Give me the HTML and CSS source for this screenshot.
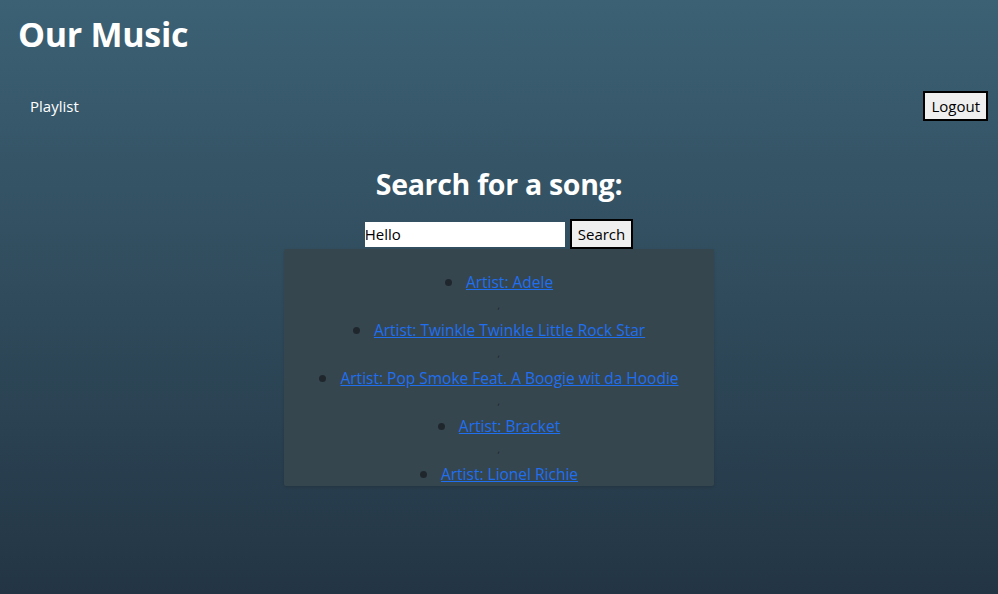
FILE: index.html
```html
<!DOCTYPE html>
<html>
<head>
<meta charset="utf-8">
<link rel="stylesheet" href="styles.css">
</head>
<body>
<div class="app">
  <h1 class="title">Our Music</h1>
  <nav class="nav">
    <a class="nav-link" href="#">Playlist</a>
    <button class="btn logout">Logout</button>
  </nav>
  <main class="search">
    <h2 class="search-title">Search for a song:</h2>
    <form class="search-form">
      <input class="search-input" type="text" value="Hello">
      <button class="btn search-btn" type="button">Search</button>
    </form>
    <div class="results">
      <ul class="result-list">
        <li><a href="#">Artist: Adele</a></li>
        <span class="sep">,</span>
        <li><a href="#">Artist: Twinkle Twinkle Little Rock Star</a></li>
        <span class="sep">,</span>
        <li><a href="#">Artist: Pop Smoke Feat. A Boogie wit da Hoodie</a></li>
        <span class="sep">,</span>
        <li><a href="#">Artist: Bracket</a></li>
        <span class="sep">,</span>
        <li><a href="#">Artist: Lionel Richie</a></li>
      </ul>
    </div>
  </main>
</div>
</body>
</html>
```
FILE: styles.css
```css
html, body {
  margin: 0;
  padding: 0;
  height: 100%;
}
body {
  font-family: "Open Sans", "Noto Sans", sans-serif;
  background: linear-gradient(180deg, #3c6174 0%, #233544 100%);
  color: #ffffff;
  min-height: 594px;
}
.app {
  padding: 0 10px 0 18px;
}
.title {
  margin: 0;
  padding-top: 12px;
  font-size: 34px;
  font-weight: 700;
  line-height: 44px;
  letter-spacing: -0.3px;
}
.nav {
  display: flex;
  justify-content: space-between;
  align-items: center;
  margin-top: 35px;
}
.nav-link {
  color: #ffffff;
  text-decoration: none;
  font-size: 15px;
  margin-left: 12px;
}
.btn {
  font-family: "Open Sans", "Noto Sans", sans-serif;
  font-size: 15px;
  color: #000;
  background: #efefef;
  border: 2px solid #000;
  padding: 0 6px;
  height: 30px;
  line-height: 24px;
}
.search {
  display: flex;
  flex-direction: column;
  align-items: center;
  margin-top: 45px;
  margin-left: -8px;
}
.search-title {
  margin: 0;
  font-size: 28.5px;
  font-weight: 700;
  line-height: 36px;
  letter-spacing: -0.3px;
}
.search-form {
  display: flex;
  align-items: center;
  margin-top: 17px;
  gap: 5px;
}
.search-input {
  width: 200px;
  height: 25px;
  box-sizing: border-box;
  border: none;
  padding: 0 1px 0 0;
  font-family: "Open Sans", "Noto Sans", sans-serif;
  font-size: 15px;
  color: #000;
  outline: none;
}
.search-btn {
  height: 30px;
}
.results {
  width: 430px;
  margin-top: 0;
  background: #36464f;
  border-radius: 2px;
  box-shadow: 0 1px 3px rgba(0,0,0,0.15);
  padding: 21px 0 0;
}
.result-list {
  margin: 0;
  padding: 0;
  text-align: center;
  list-style: none;
  color: #232a30;
}
.result-list li {
  line-height: 24px;
  font-size: 15.5px;
}
.result-list li::before {
  content: "";
  display: inline-block;
  width: 7px;
  height: 7px;
  border-radius: 50%;
  background: #1f272d;
  margin-right: 14px;
  vertical-align: 2px;
}
.result-list a {
  color: #1f6ff0;
}
.sep {
  display: block;
  font-size: 9px;
  line-height: 24px;
  color: #1a2328;
  font-style: italic;
}
```
